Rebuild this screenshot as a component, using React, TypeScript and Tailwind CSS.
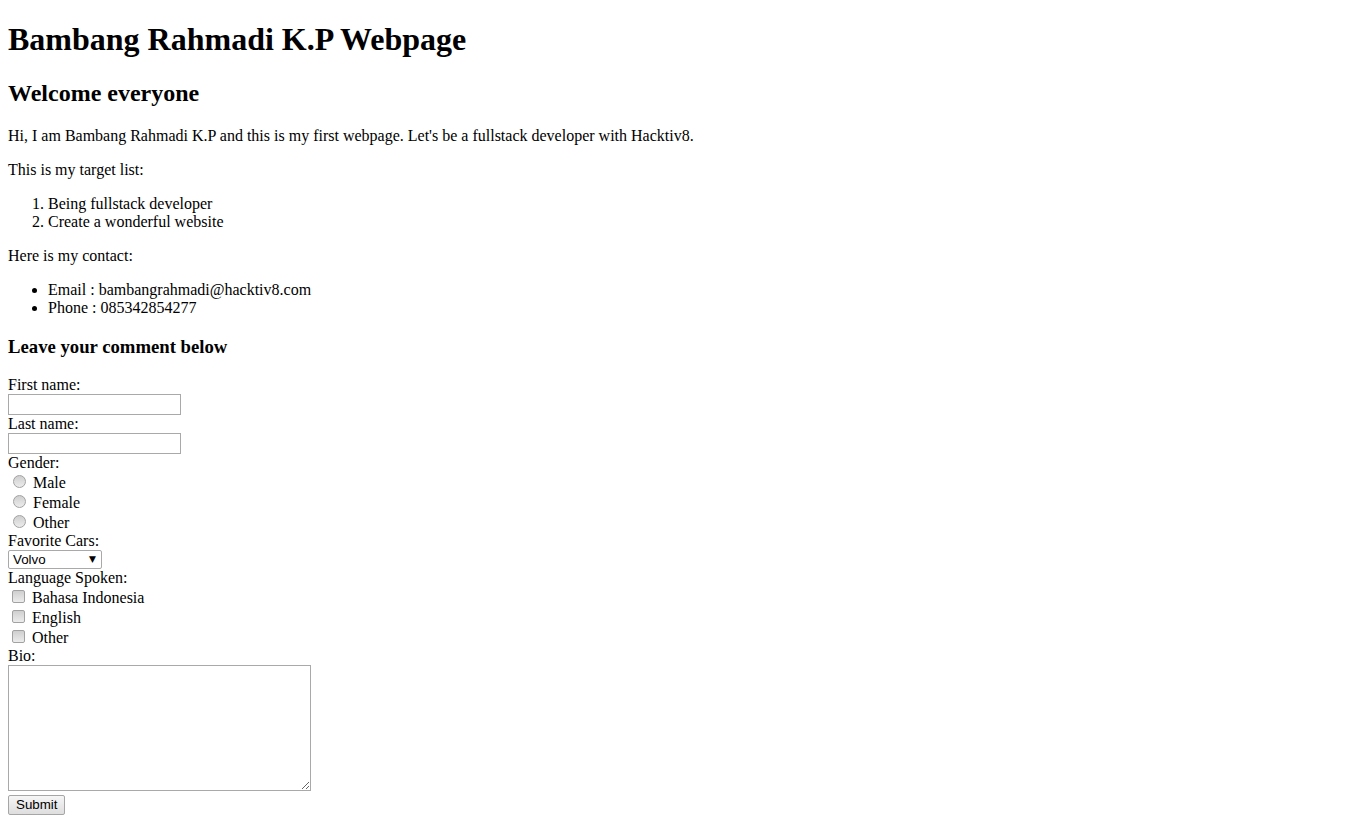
import React from 'react';

const radioCls =
  "appearance-none inline-block w-[13px] h-[13px] rounded-full border border-[#a2a2a2] bg-gradient-to-b from-[#cfcfcf] to-[#ececec] ml-[5px] mr-[3px] mt-[3px] mb-0 align-baseline";
const checkCls =
  "appearance-none inline-block w-[13px] h-[13px] rounded-[2px] border border-[#a2a2a2] bg-gradient-to-b from-[#cfcfcf] to-[#ececec] ml-[4px] mr-[3px] mt-[3px] mb-0 align-baseline";
const textCls =
  "inline-block w-[173px] h-[21px] border border-[#a9a9a9] px-[2px] py-[1px] text-[13.33px] font-['Liberation_Sans',Arial,sans-serif] align-baseline bg-white";

export default function App() {
  return (
    <div className="min-h-screen bg-white px-2 pb-2 text-black font-['Liberation_Serif','Times_New_Roman',serif] text-[16px] leading-[normal]">
      <h1 className="text-[32px] font-bold my-[21.44px] leading-[normal]">Bambang Rahmadi K.P Webpage</h1>
      <h2 className="text-[24px] font-bold my-[19.92px] leading-[normal]">Welcome everyone</h2>
      <p className="my-4">
        Hi, I am Bambang Rahmadi K.P and this is my first webpage. Let's be a fullstack developer with Hacktiv8.
      </p>
      <p className="my-4">This is my target list:</p>
      <ol className="my-4 pl-10 list-decimal">
        <li>Being fullstack developer</li>
        <li>Create a wonderful website</li>
      </ol>
      <p className="my-4">Here is my contact:</p>
      <ul className="my-4 pl-10 list-disc">
        <li>Email : bambangrahmadi@hacktiv8.com</li>
        <li>Phone : 085342854277</li>
      </ul>
      <h3 className="text-[18.72px] font-bold my-[18.72px] leading-[normal]">Leave your comment below</h3>
      <form onSubmit={(e) => e.preventDefault()}>
        <label>First name:</label>
        <br />
        <input type="text" className={textCls} />
        <br />
        <label>Last name:</label>
        <br />
        <input type="text" className={textCls} />
        <br />
        <label>Gender:</label>
        <br />
        <input type="radio" name="gender" className={radioCls} /> Male
        <br />
        <input type="radio" name="gender" className={radioCls} /> Female
        <br />
        <input type="radio" name="gender" className={radioCls} /> Other
        <br />
        <label>Favorite Cars:</label>
        <br />
        <span className="relative inline-block align-baseline">
          <select className="appearance-none w-[94px] h-[19px] border border-[#a9a9a9] rounded-[2px] bg-white pl-[4px] text-[13.33px] leading-[17px] font-['Liberation_Sans',Arial,sans-serif] align-baseline">
            <option>Volvo</option>
            <option>Saab</option>
            <option>Fiat</option>
            <option>Audi</option>
          </select>
          <span className="pointer-events-none absolute right-[6px] top-[3px] text-[9px] leading-[12px] font-['DejaVu_Sans',sans-serif]">▼</span>
        </span>
        <br />
        <label>Language Spoken:</label>
        <br />
        <input type="checkbox" className={checkCls} /> Bahasa Indonesia
        <br />
        <input type="checkbox" className={checkCls} /> English
        <br />
        <input type="checkbox" className={checkCls} /> Other
        <br />
        <label>Bio:</label>
        <br />
        <textarea className="w-[303px] h-[126px] border border-[#a9a9a9] p-[2px] align-baseline text-[13.33px] font-['Liberation_Mono',monospace]" />
        <br />
        <button
          type="submit"
          className="inline-block h-[20px] px-[7px] border border-[#a6a6a6] rounded-[2px] bg-gradient-to-b from-[#f6f6f6] to-[#dedede] text-[13.33px] leading-[16px] font-['Liberation_Sans',Arial,sans-serif] align-baseline"
        >
          Submit
        </button>
      </form>
    </div>
  );
}
